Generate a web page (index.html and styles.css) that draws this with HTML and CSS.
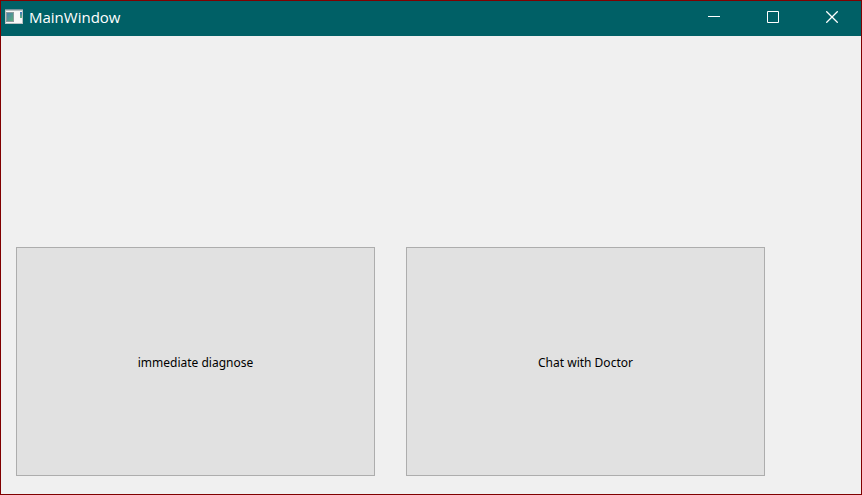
FILE: index.html
```html
<!DOCTYPE html>
<html lang="en">
<head>
<meta charset="utf-8">
<title>MainWindow</title>
<link rel="stylesheet" href="styles.css">
</head>
<body>
<div class="window">
  <header class="titlebar">
    <svg class="app-icon" width="18" height="16" viewBox="0 0 18 16" aria-hidden="true">
      <defs>
        <linearGradient id="pane" x1="0" y1="0" x2="1" y2="1">
          <stop offset="0" stop-color="#4b7fae"/>
          <stop offset="1" stop-color="#58ae78"/>
        </linearGradient>
        <linearGradient id="strip" x1="0" y1="0" x2="0" y2="1">
          <stop offset="0" stop-color="#3f78c0"/>
          <stop offset="1" stop-color="#62b47a"/>
        </linearGradient>
      </defs>
      <rect x="0" y="0" width="18" height="15" fill="#b9c2c4"/>
      <rect x="0" y="0" width="18" height="1" fill="#76949b"/>
      <rect x="1" y="2" width="16" height="12" fill="#f8f8f8"/>
      <rect x="1" y="3" width="8" height="10" fill="#8b9b9d"/>
      <rect x="2" y="4" width="6" height="8" fill="url(#pane)"/>
      <rect x="15" y="3" width="2" height="6" fill="url(#strip)"/>
    </svg>
    <h1 class="title">MainWindow</h1>
    <div class="controls">
      <button class="control" type="button" aria-label="Minimize">
        <svg width="12" height="12" viewBox="0 0 12 12"><path d="M0 5.5H12"/></svg>
      </button>
      <button class="control" type="button" aria-label="Maximize">
        <svg width="12" height="12" viewBox="0 0 12 12"><path d="M.5 .5H11.5V11.5H.5Z"/></svg>
      </button>
      <button class="control" type="button" aria-label="Close">
        <svg width="12" height="12" viewBox="0 0 12 12"><path class="cross" d="M.3 .3L11.7 11.7M11.7 .3L.3 11.7"/></svg>
      </button>
    </div>
  </header>
  <main class="content">
    <button class="action" type="button">immediate diagnose</button>
    <button class="action" type="button">Chat with Doctor</button>
  </main>
</div>
</body>
</html>
```

FILE: styles.css
```css
* {
  box-sizing: border-box;
}

body {
  margin: 0;
}

.window {
  display: flex;
  flex-direction: column;
  min-height: 100vh;
  border: 1px solid #800000;
  background: #f0f0f0;
}

.titlebar {
  display: flex;
  align-items: center;
  height: 35px;
  padding: 0 0 3px 4px;
  background: #006066;
  color: #fff;
}

.app-icon {
  flex: none;
}

.title {
  flex: 1;
  margin: 0 0 0 6px;
  font: 400 15px/20px "Open Sans", sans-serif;
}

.controls {
  display: flex;
  align-self: stretch;
  gap: 1px;
}

.control {
  display: flex;
  align-items: center;
  justify-content: center;
  width: 58px;
  padding: 0;
  border: 0;
  background: none;
}

.control path {
  fill: none;
  stroke: #fff;
}

.control .cross {
  stroke-width: 1.3;
}

.content {
  display: grid;
  flex: 1;
  grid-template-columns: 1fr 1fr;
  align-items: end;
  gap: 31px;
  padding: 16px 96px 18px 15px;
}

.action {
  min-height: 229px;
  padding: 2px 8px 0;
  border: 1px solid #adadad;
  background: #e1e1e1;
  color: #000;
  font: 12px/16px "Noto Sans", sans-serif;
}
```
